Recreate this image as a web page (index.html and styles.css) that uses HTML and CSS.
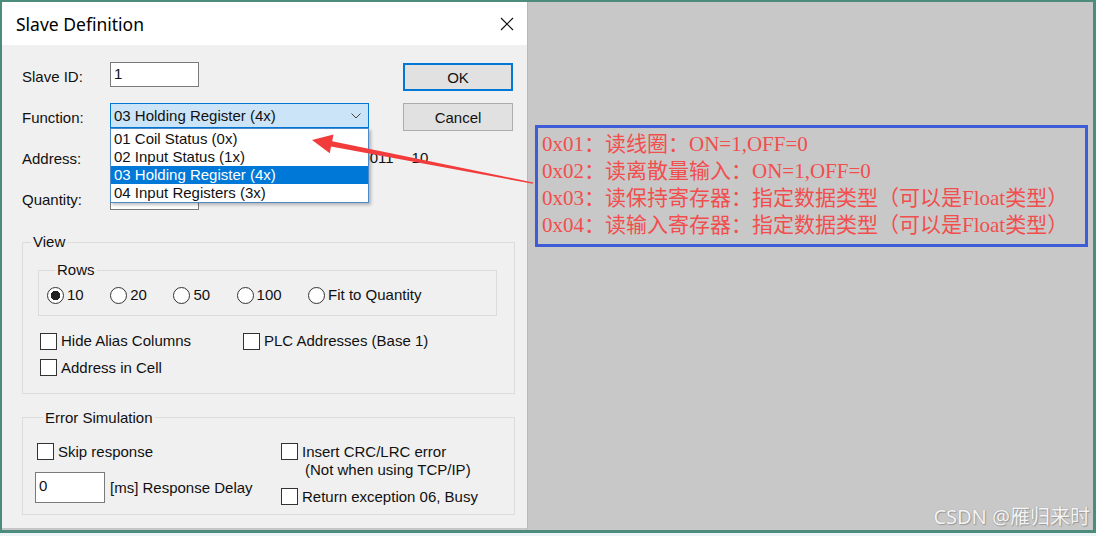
FILE: index.html
```html
<!DOCTYPE html>
<html lang="zh-CN">
<head>
  <meta charset="UTF-8">
  <meta name="viewport" content="width=device-width, initial-scale=1.0">
  <title>Slave Definition</title>
  <link rel="stylesheet" href="styles.css">
</head>
<body>
  <div class="frame">
    <div class="dialog">
      <div class="titlebar">
        <span class="title">Slave Definition</span>
        <svg class="close" viewBox="0 0 14 14"><path d="M1 1 L13 13 M13 1 L1 13" stroke="#111" stroke-width="1.2" fill="none"/></svg>
      </div>

      <div class="dialog-body">
        <div class="top">
          <div class="form">
            <div class="row">
              <label>Slave ID:</label>
              <div class="input">1</div>
            </div>
            <div class="row">
              <label>Function:</label>
              <div class="select">
                <span>03 Holding Register (4x)</span>
                <svg class="chevron" viewBox="0 0 10 6"><path d="M0.5 0.5 L5 5 L9.5 0.5" stroke="#444" stroke-width="1" fill="none"/></svg>
                <ul class="dropdown">
                  <li>01 Coil Status (0x)</li>
                  <li>02 Input Status (1x)</li>
                  <li class="active">03 Holding Register (4x)</li>
                  <li>04 Input Registers (3x)</li>
                </ul>
              </div>
            </div>
            <div class="row">
              <label>Address:</label>
              <div class="input"></div>
              <span class="hint">40011</span>
              <span class="hint hint-b">10</span>
            </div>
            <div class="row">
              <label>Quantity:</label>
              <div class="input"></div>
            </div>
          </div>
          <div class="buttons">
            <button class="btn default">OK</button>
            <button class="btn">Cancel</button>
          </div>
        </div>

        <fieldset class="group view">
          <legend>View</legend>
          <fieldset class="group rows">
            <legend>Rows</legend>
            <div class="radios">
              <span class="opt"><span class="radio checked"></span>10</span>
              <span class="opt"><span class="radio"></span>20</span>
              <span class="opt"><span class="radio"></span>50</span>
              <span class="opt"><span class="radio"></span>100</span>
              <span class="opt"><span class="radio"></span>Fit to Quantity</span>
            </div>
          </fieldset>
          <div class="checks">
            <span class="opt"><span class="box"></span>Hide Alias Columns</span>
            <span class="opt"><span class="box"></span>PLC Addresses (Base 1)</span>
            <span class="opt"><span class="box"></span>Address in Cell</span>
          </div>
        </fieldset>

        <fieldset class="group error">
          <legend>Error Simulation</legend>
          <div class="err-grid">
            <div class="err-left">
              <span class="opt skip"><span class="box"></span>Skip response</span>
              <div class="delay">
                <div class="input wide">0</div>
                <span>[ms] Response Delay</span>
              </div>
            </div>
            <div class="err-right">
              <span class="opt top-align"><span class="box"></span><span class="two-line">Insert CRC/LRC error<br><span class="sub">(Not when using TCP/IP)</span></span></span>
              <span class="opt busy"><span class="box"></span>Return exception 06, Busy</span>
            </div>
          </div>
        </fieldset>
      </div>
    </div>

    <div class="canvas">
      <div class="note">
        <div>0x01：读线圈：ON=1,OFF=0</div>
        <div>0x02：读离散量输入：ON=1,OFF=0</div>
        <div>0x03：读保持寄存器：指定数据类型（可以是Float类型）</div>
        <div>0x04：读输入寄存器：指定数据类型（可以是Float类型）</div>
      </div>
      <div class="watermark">CSDN @雁归来时</div>
    </div>
  </div>

  <svg class="arrow" viewBox="0 0 1096 536">
    <polygon points="312,140 333.5,134.5 332.2,141.2 533.2,182.4 532.8,183.8 331.0,146.4 329.8,153.2" fill="#f23c3c"/>
  </svg>
</body>
</html>
```

FILE: styles.css
```css
body {
  margin: 0;
  background: #eef3f5;
  font-family: "Liberation Sans", Arial, sans-serif;
  font-size: 15px;
  color: #111;
  position: relative;
}

.frame {
  display: flex;
  width: 1096px;
  height: 533px;
  box-sizing: border-box;
  border-style: solid;
  border-color: #4b8c7d;
  border-width: 2px 3px 3px 2px;
}

/* dialog */
.dialog {
  width: 526px;
  display: flex;
  flex-direction: column;
  box-sizing: border-box;
  background: #f0f0f0;
  border-right: 1px solid #b9b9b9;
  border-bottom: 2px solid #c6c6c6;
}

.titlebar {
  height: 43px;
  flex-shrink: 0;
  background: #fff;
  display: flex;
  align-items: center;
  justify-content: space-between;
  padding: 0 13px 0 14px;
}

.title {
  font-family: "Noto Sans", sans-serif;
  font-size: 17.5px;
  color: #000;
}

.close {
  width: 14px;
  height: 14px;
}

.dialog-body {
  padding: 17px 0 0 20px;
}

.top {
  display: flex;
}

.form {
  width: 381px;
  display: flex;
  flex-direction: column;
  gap: 16px;
}

.row {
  display: flex;
  height: 25px;
  align-items: flex-start;
}

.row > * {
  flex-shrink: 0;
}

.row label {
  width: 88px;
  padding-top: 6px;
  line-height: 18px;
}

.input {
  width: 89px;
  height: 25px;
  box-sizing: border-box;
  border: 1px solid #7a7a7a;
  background: #fff;
  padding: 2px 0 0 3px;
  line-height: 17px;
}

.select {
  position: relative;
  width: 259px;
  height: 25px;
  box-sizing: border-box;
  border: 1px solid #0078d7;
  background: #cce4f7;
  padding: 0 7px 0 3px;
  display: flex;
  align-items: center;
  justify-content: space-between;
  line-height: 23px;
}

.chevron {
  width: 10px;
  height: 6px;
}

.dropdown {
  position: absolute;
  top: 24px;
  left: -1px;
  width: 259px;
  box-sizing: border-box;
  margin: 0;
  padding: 1px 0 0;
  list-style: none;
  background: #fff;
  border: 1px solid #4d88c9;
  box-shadow: 2px 2px 3px rgba(0, 0, 0, 0.25);
  z-index: 2;
}

.dropdown li {
  height: 18px;
  line-height: 18px;
  padding-left: 3px;
}

.dropdown li.active {
  background: #0078d7;
  color: #fff;
}

.hint {
  margin-left: 154px;
  padding-top: 5px;
  line-height: 18px;
}

.hint-b {
  margin-left: 18px;
}

.buttons {
  display: flex;
  flex-direction: column;
  gap: 12px;
  padding-top: 1px;
}

.btn {
  width: 110px;
  height: 28px;
  font: inherit;
  color: #111;
  background: #e1e1e1;
  border: 1px solid #adadad;
  padding: 0;
}

.btn.default {
  border-color: #0078d7;
  box-shadow: inset 0 0 0 1px #0078d7;
}

/* group boxes */
.group {
  margin: 0;
  padding: 0;
  min-width: 0;
  border: 1px solid #dcdcdc;
  box-sizing: border-box;
}

.group legend {
  padding: 0 2px;
  margin-left: 8px;
  line-height: 18px;
}

.view {
  width: 493px;
  margin-top: 23px;
}

.rows {
  width: 459px;
  margin: 10px 0 0 15px;
  padding: 7px 0 11px 8px;
}

.radios {
  display: flex;
  gap: 26.5px;
}

.opt {
  display: flex;
  align-items: center;
  gap: 3px;
  line-height: 18px;
  white-space: nowrap;
}

.radio {
  width: 17px;
  height: 17px;
  box-sizing: border-box;
  border: 1px solid #333;
  border-radius: 50%;
  background: #fff;
}

.radio.checked {
  background: radial-gradient(circle, #222 0 4.5px, #fff 5px);
}

.box {
  width: 17px;
  height: 17px;
  box-sizing: border-box;
  border: 1px solid #333;
  background: #fff;
  margin-right: 1px;
}

.checks {
  display: grid;
  grid-template-columns: 203px auto;
  row-gap: 8.5px;
  margin: 16px 0 16px 17px;
}

.error {
  width: 493px;
  margin-top: 15px;
  padding: 16px 0 8px 12px;
}

.err-grid {
  display: flex;
}

.err-left {
  width: 246px;
}

.skip {
  margin-left: 2px;
}

.delay {
  display: flex;
  align-items: center;
  gap: 5px;
  margin-top: 11.5px;
}

.input.wide {
  width: 70px;
  height: 31px;
  padding-top: 4px;
}

.top-align {
  align-items: flex-start;
}

.sub {
  padding-left: 3px;
}

.busy {
  margin-top: 9px;
}

/* annotation side */
.canvas {
  flex: 1;
  background: #c8c8c8;
  display: flex;
  flex-direction: column;
  padding: 123px 0 0 7px;
}

.note {
  width: 553px;
  box-sizing: border-box;
  border: 3px solid #3d5cd6;
  padding: 3px 0 5px 4px;
  font-family: "Liberation Serif", "Noto Sans CJK SC", serif;
  font-size: 21px;
  line-height: 27px;
  color: #f24e4e;
  white-space: nowrap;
}

.watermark {
  margin-top: auto;
  align-self: flex-end;
  margin-right: 3px;
  font-family: "Noto Sans", "Noto Sans CJK SC", sans-serif;
  font-size: 20px;
  line-height: 26px;
  color: #f4f4f4;
  text-shadow: 0 0 1px #8c8c8c, 1px 1px 1px #9a9a9a;
}

.arrow {
  position: absolute;
  top: 0;
  left: 0;
  width: 1096px;
  height: 536px;
  pointer-events: none;
  z-index: 5;
}
```
